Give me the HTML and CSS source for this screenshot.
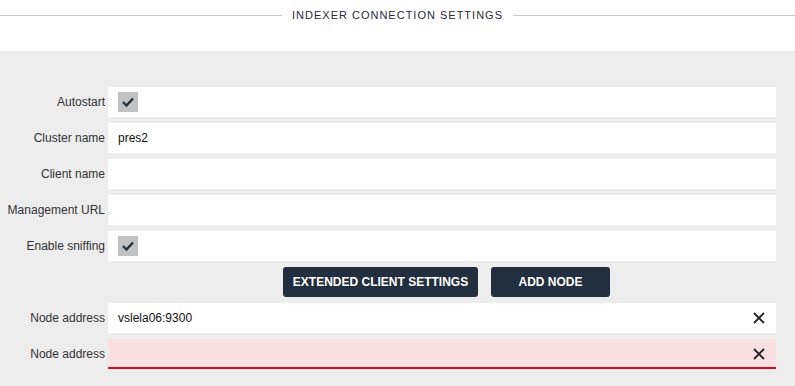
FILE: index.html
```html
<!DOCTYPE html>
<html lang="en">
<head>
  <meta charset="UTF-8">
  <meta name="viewport" content="width=device-width, initial-scale=1.0">
  <link rel="stylesheet" href="styles.css">
</head>
<body>
  <div class="header">
    <h2 class="title">INDEXER CONNECTION SETTINGS</h2>
  </div>
  <div class="settings">
    <div class="row">
      <label class="label">Autostart</label>
      <div class="field">
        <span class="check">
          <svg width="12" height="10" viewBox="0 0 12 10"><path d="M1 5 L4.5 8.5 L11 1.5" fill="none" stroke="#222f3e" stroke-width="2.4"/></svg>
        </span>
      </div>
    </div>
    <div class="row">
      <label class="label">Cluster name</label>
      <div class="field">pres2</div>
    </div>
    <div class="row">
      <label class="label">Client name</label>
      <div class="field"></div>
    </div>
    <div class="row">
      <label class="label">Management URL</label>
      <div class="field"></div>
    </div>
    <div class="row">
      <label class="label">Enable sniffing</label>
      <div class="field">
        <span class="check">
          <svg width="12" height="10" viewBox="0 0 12 10"><path d="M1 5 L4.5 8.5 L11 1.5" fill="none" stroke="#222f3e" stroke-width="2.4"/></svg>
        </span>
      </div>
    </div>
    <div class="row">
      <span></span>
      <div class="buttons">
        <button class="btn">EXTENDED CLIENT SETTINGS</button>
        <button class="btn btn-add">ADD NODE</button>
      </div>
    </div>
    <div class="row">
      <label class="label">Node address</label>
      <div class="field">
        <span class="value">vslela06:9300</span>
        <svg class="remove" width="12" height="12" viewBox="0 0 12 12"><path d="M1 1 L11 11 M11 1 L1 11" stroke="#222" stroke-width="1.8"/></svg>
      </div>
    </div>
    <div class="row">
      <label class="label">Node address</label>
      <div class="field invalid">
        <span class="value"></span>
        <svg class="remove" width="12" height="12" viewBox="0 0 12 12"><path d="M1 1 L11 11 M11 1 L1 11" stroke="#222" stroke-width="1.8"/></svg>
      </div>
    </div>
  </div>
</body>
</html>
```

FILE: styles.css
```css
* {
  margin: 0;
  padding: 0;
  box-sizing: border-box;
}

body {
  width: 795px;
  height: 386px;
  overflow: hidden;
  background: #ededed;
  font-family: "Liberation Sans", Arial, sans-serif;
  font-size: 12px;
  color: #222;
}

.header {
  background: #fff;
  height: 51px;
  padding-top: 9px;
}

.title {
  display: flex;
  align-items: center;
  gap: 10px;
  font-size: 11px;
  font-weight: normal;
  letter-spacing: 1px;
  color: #2a2a35;
  line-height: 13px;
}

.title::before,
.title::after {
  content: "";
  flex: 1;
  height: 1px;
  background: #c8c8c8;
}

.settings {
  padding: 36px 19px 0 0;
  display: flex;
  flex-direction: column;
  gap: 6px;
}

.row {
  display: grid;
  grid-template-columns: 108px 1fr;
  height: 30px;
}

.label {
  text-align: right;
  padding-right: 3px;
  line-height: 30px;
  color: #333;
  white-space: nowrap;
}

.field {
  background: #fff;
  display: flex;
  align-items: center;
  padding: 0 11px 0 10px;
  color: #111;
}

.value {
  flex: 1;
}

.check {
  width: 20px;
  height: 20px;
  background: #c2c2c2;
  display: flex;
  align-items: center;
  justify-content: center;
}

.invalid {
  background: #f9e0e2;
  border-bottom: 2px solid #d2101c;
  padding-top: 2px;
}

.buttons {
  display: flex;
  justify-content: center;
  gap: 13px;
  padding-left: 9px;
}

.btn {
  background: #222f3e;
  color: #fff;
  border: none;
  border-radius: 3px;
  font-family: "Liberation Sans", Arial, sans-serif;
  font-size: 12px;
  font-weight: bold;
  height: 30px;
  width: 195px;
}

.btn-add {
  width: 119px;
}
```
